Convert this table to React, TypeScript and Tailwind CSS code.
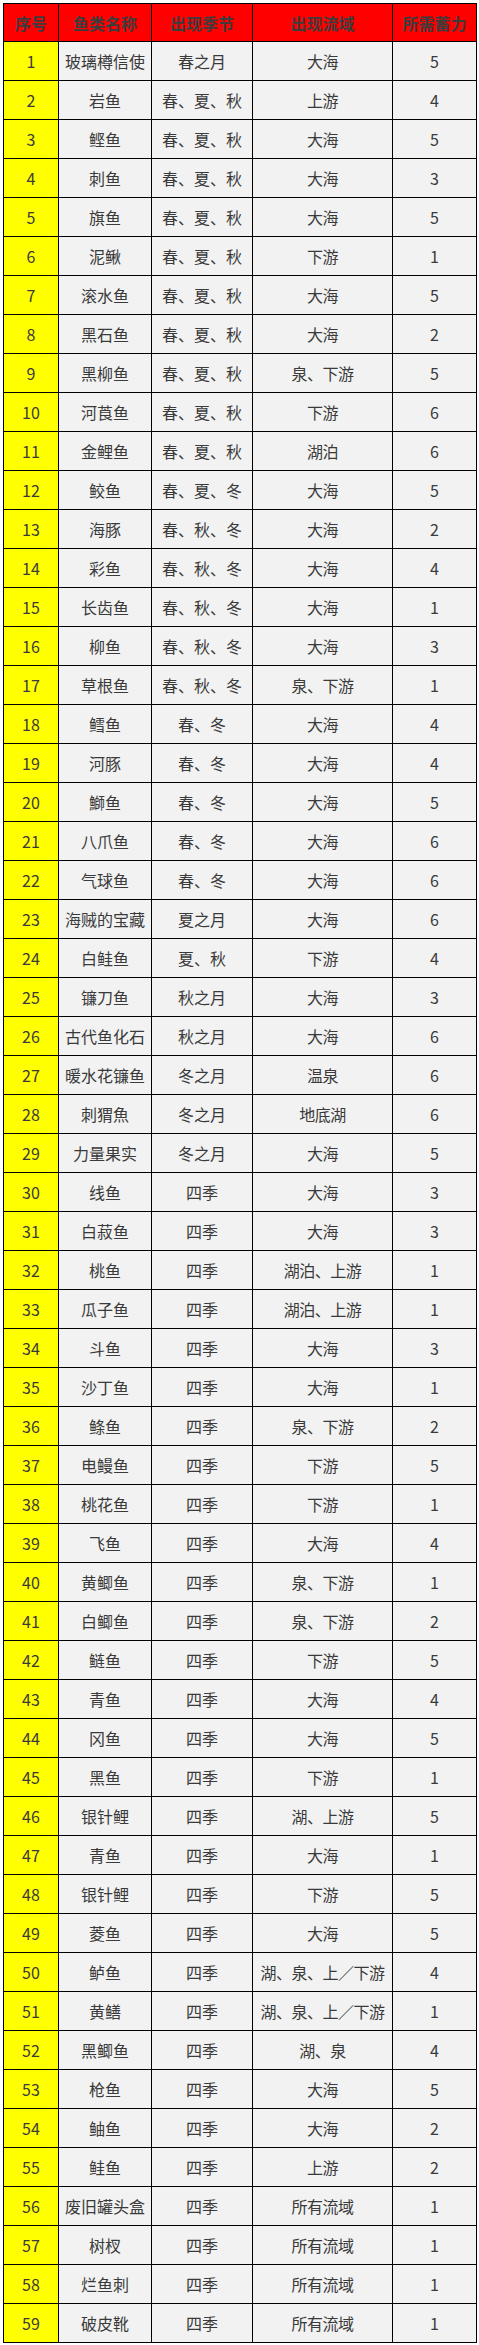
import React from "react";

type Fish = [string, string, string, number];

const fishes: Fish[] = [
  ["玻璃樽信使", "春之月", "大海", 5],
  ["岩鱼", "春、夏、秋", "上游", 4],
  ["鲣鱼", "春、夏、秋", "大海", 5],
  ["刺鱼", "春、夏、秋", "大海", 3],
  ["旗鱼", "春、夏、秋", "大海", 5],
  ["泥鳅", "春、夏、秋", "下游", 1],
  ["滚水鱼", "春、夏、秋", "大海", 5],
  ["黑石鱼", "春、夏、秋", "大海", 2],
  ["黑柳鱼", "春、夏、秋", "泉、下游", 5],
  ["河莨鱼", "春、夏、秋", "下游", 6],
  ["金鲤鱼", "春、夏、秋", "湖泊", 6],
  ["鲛鱼", "春、夏、冬", "大海", 5],
  ["海豚", "春、秋、冬", "大海", 2],
  ["彩鱼", "春、秋、冬", "大海", 4],
  ["长齿鱼", "春、秋、冬", "大海", 1],
  ["柳鱼", "春、秋、冬", "大海", 3],
  ["草根鱼", "春、秋、冬", "泉、下游", 1],
  ["鳕鱼", "春、冬", "大海", 4],
  ["河豚", "春、冬", "大海", 4],
  ["鰤鱼", "春、冬", "大海", 5],
  ["八爪鱼", "春、冬", "大海", 6],
  ["气球鱼", "春、冬", "大海", 6],
  ["海贼的宝藏", "夏之月", "大海", 6],
  ["白鲑鱼", "夏、秋", "下游", 4],
  ["镰刀鱼", "秋之月", "大海", 3],
  ["古代鱼化石", "秋之月", "大海", 6],
  ["暖水花镰鱼", "冬之月", "温泉", 6],
  ["刺猬魚", "冬之月", "地底湖", 6],
  ["力量果实", "冬之月", "大海", 5],
  ["线鱼", "四季", "大海", 3],
  ["白菽鱼", "四季", "大海", 3],
  ["桃鱼", "四季", "湖泊、上游", 1],
  ["瓜子鱼", "四季", "湖泊、上游", 1],
  ["斗鱼", "四季", "大海", 3],
  ["沙丁鱼", "四季", "大海", 1],
  ["鲦鱼", "四季", "泉、下游", 2],
  ["电鳗鱼", "四季", "下游", 5],
  ["桃花鱼", "四季", "下游", 1],
  ["飞鱼", "四季", "大海", 4],
  ["黄鲫鱼", "四季", "泉、下游", 1],
  ["白鲫鱼", "四季", "泉、下游", 2],
  ["鲢鱼", "四季", "下游", 5],
  ["青鱼", "四季", "大海", 4],
  ["冈鱼", "四季", "大海", 5],
  ["黑鱼", "四季", "下游", 1],
  ["银针鲤", "四季", "湖、上游", 5],
  ["青鱼", "四季", "大海", 1],
  ["银针鲤", "四季", "下游", 5],
  ["菱鱼", "四季", "大海", 5],
  ["鲈鱼", "四季", "湖、泉、上／下游", 4],
  ["黄鳝", "四季", "湖、泉、上／下游", 1],
  ["黑鲫鱼", "四季", "湖、泉", 4],
  ["枪鱼", "四季", "大海", 5],
  ["鲉鱼", "四季", "大海", 2],
  ["鲑鱼", "四季", "上游", 2],
  ["废旧罐头盒", "四季", "所有流域", 1],
  ["树杈", "四季", "所有流域", 1],
  ["烂鱼刺", "四季", "所有流域", 1],
  ["破皮靴", "四季", "所有流域", 1],
];

const headers = ["序号", "鱼类名称", "出现季节", "出现流域", "所需蓄力"];

const cell =
  "flex items-center justify-center border-r border-b border-black whitespace-nowrap overflow-hidden";

export default function App() {
  return (
    <div
      className="p-[3px] bg-white"
      style={{ fontFamily: '"Noto Sans CJK SC", "Liberation Sans", sans-serif' }}
    >
      <div className="grid w-[474px] grid-cols-[55px_93px_101px_140px_84px] border-l border-t border-black text-[16px] text-[#3a3a3a]">
        {headers.map((h) => (
          <div key={h} className={`${cell} h-[38px] bg-[#ff0000] font-bold text-[#3c3c3c]`}>
            {h}
          </div>
        ))}
        {fishes.map((f, i) => (
          <React.Fragment key={i}>
            <div className={`${cell} h-[39px] bg-[#ffff00]`}>{i + 1}</div>
            <div className={`${cell} h-[39px] bg-[#f2f2f2]`}>{f[0]}</div>
            <div className={`${cell} h-[39px] bg-[#f2f2f2]`}>{f[1]}</div>
            <div className={`${cell} h-[39px] bg-[#f2f2f2] tracking-[-0.5px]`}>{f[2]}</div>
            <div className={`${cell} h-[39px] bg-[#f2f2f2]`}>{f[3]}</div>
          </React.Fragment>
        ))}
      </div>
    </div>
  );
}
